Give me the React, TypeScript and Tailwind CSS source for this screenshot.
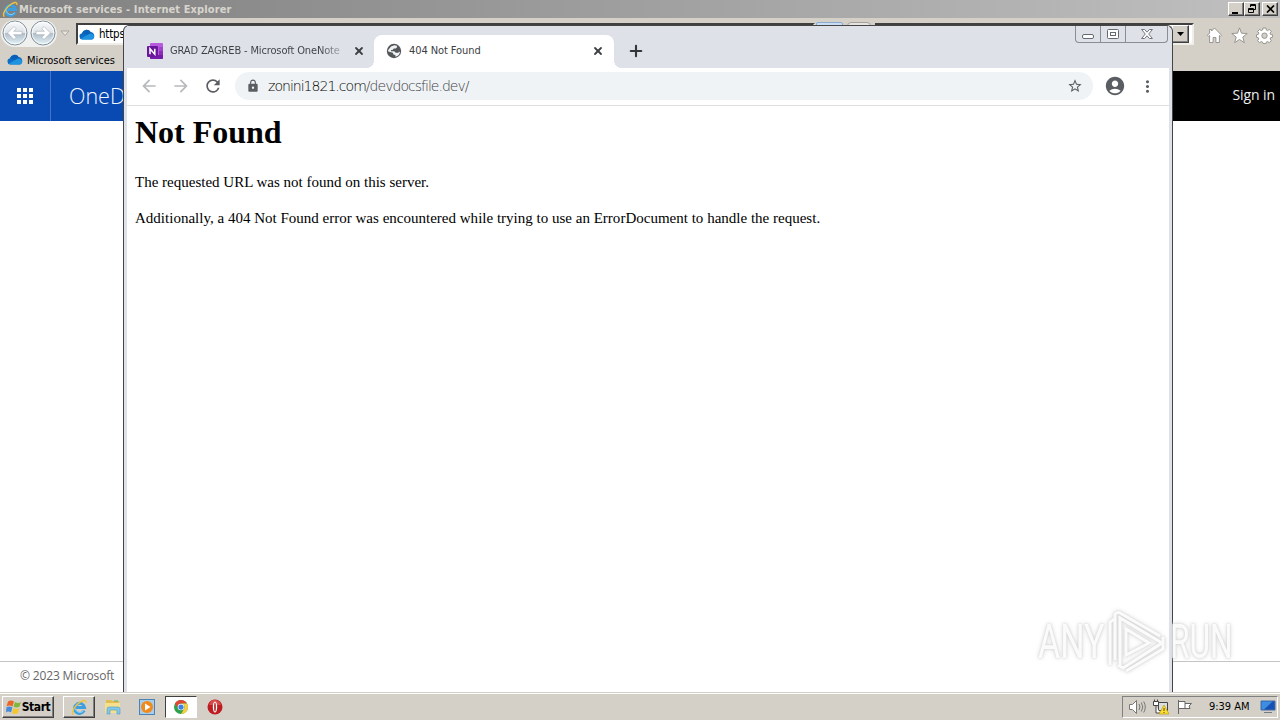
import type { ReactNode } from 'react';
import { Plus, X } from 'lucide-react';
import { MdArrowBack, MdArrowForward, MdRefresh, MdLock, MdStarBorder, MdAccountCircle, MdMoreVert } from 'react-icons/md';

const tahoma = "font-['DejaVu_Sans_Condensed','DejaVu_Sans',sans-serif] [font-stretch:condensed]";
const segoe = "font-['Open_Sans','Noto_Sans',sans-serif]";

function CloudIcon({ className }: { className: string }) {
  return (
    <svg className={className} viewBox="0 0 16 11">
      <path d="M3.200 10.600A3.200 3.200 0 0 1 3 4.300 4.800 4.800 0 0 1 11.600 3 4 4 0 0 1 13 10.600z" fill="#0f6cc4" />
      <path d="M3 4.300A4.800 4.800 0 0 1 11.600 3L9 6z" fill="#0a60b8" />
      <path d="M2 9.500L10 5a4 4 0 0 1 4.500 1A3 3 0 0 1 13 10.600H3.200z" fill="#1f93e0" />
    </svg>
  );
}

function IeIcon({ className }: { className: string }) {
  return (
    <svg className={className} viewBox="0 0 18 18" fill="none">
      <path d="M14 12.200A5.400 5.400 0 1 1 14.400 9H5.400" stroke="#3d9fe0" strokeWidth="3" />
      <path d="M13.300 12.600A5 5 0 0 1 4.500 10" stroke="#8ed6f8" strokeWidth="1" />
      <path d="M2.500 16.500C-.8 14.500 5 5.500 11 2.500c3.500-1.700 5.500-1 4.600 1.800" stroke="#f0c43a" strokeWidth="1.500" />
    </svg>
  );
}

function GlobeIcon() {
  return (
    <svg className="h-4 w-4" viewBox="0 0 16 16">
      <circle cx="8" cy="8" r="7.200" fill="#54575b" />
      <path d="M8.300 2.200l2.500.6.300 1.500-1.500 1.200H7.800L6.500 7H5v1.200h3.200l1.500 1.500H12l2-1.200A6 6 0 0 1 9.500 13.800L9.300 12 7.500 11.500 6.800 9.800 2.300 8.500 2 7.200l3-3.700z" fill="#f1f2f3" />
    </svg>
  );
}

function ClassicButton({ className, children }: { className: string; children: ReactNode }) {
  return (
    <div className={`flex items-center justify-center border border-t-white border-l-white border-r-[#404040] border-b-[#404040] bg-[#d4d0c8] shadow-[inset_-1px_-1px_0_#808080] ${className}`}>
      {children}
    </div>
  );
}

function RoundNav({ back }: { back?: boolean }) {
  return (
    <svg className="h-[26px] w-[28px]" viewBox="0 0 27 26">
      <defs>
        <linearGradient id="navFill" x2="0" y2="1">
          <stop stopColor="#fafbfc" />
          <stop offset=".48" stopColor="#dfe4e9" />
          <stop offset=".52" stopColor="#b2bec9" />
          <stop offset="1" stopColor="#e4f3fa" />
        </linearGradient>
      </defs>
      <circle cx="13.5" cy="13" r="12" fill="url(#navFill)" stroke="#83909b" />
      <circle cx="13.5" cy="13" r="10.8" fill="none" stroke="#fff" strokeOpacity=".8" />
      <path
        d="M6 13l6.500-6.500 2.200 2.200-2.600 2.600H20.500v3.400h-8.400l2.600 2.600-2.200 2.200z"
        fill="#fff"
        stroke="#a3adb6"
        strokeWidth=".6"
        transform={back ? undefined : 'rotate(180 13.5 13)'}
      />
    </svg>
  );
}

function BrowserTitle() {
  return (
    <div className="flex h-[18px] items-center bg-linear-to-r from-[#808080] to-[#c0c0c0] pr-[2px] pl-[2px]">
      <IeIcon className="h-[17px] w-[17px]" />
      <span className={`${tahoma} mt-px flex-1 text-[11px] leading-[17px] font-bold tracking-[0.1px] whitespace-nowrap text-[#d8d5ce]`}>
        Microsoft services - Internet Explorer
      </span>
      <ClassicButton className="h-[14px] w-4">
        <svg className="h-[9px] w-[10px]" viewBox="0 0 10 9"><path d="M1 7h6v2H1z" /></svg>
      </ClassicButton>
      <ClassicButton className="h-[14px] w-4">
        <svg className="h-[10px] w-[10px]" viewBox="0 0 10 10" fill="none" stroke="#000">
          <path d="M3.500 3V.5h5v5H7M3 1.500h6M1.500 4.500h5v4h-5zM1 5.500h6" />
        </svg>
      </ClassicButton>
      <ClassicButton className="ml-[2px] h-[14px] w-4">
        <svg className="h-2 w-[9px]" viewBox="0 0 9 8"><path d="M1 .5l7 7M8 .5l-7 7" stroke="#000" strokeWidth="1.7" /></svg>
      </ClassicButton>
    </div>
  );
}

function ExplorerToolbar() {
  return (
    <div className="flex h-[30px] items-start bg-[#d4d0c8]">
      <div className="mt-[2px] ml-[1px] flex h-[27px] rounded-full bg-[#f0f0ef]">
        <RoundNav back />
        <RoundNav />
      </div>
      <svg className="mt-[12px] ml-[3px] h-[7px] w-[10px]" viewBox="0 0 10 7"><path d="M1 1h8L5 5.500z" fill="#e9e7e2" stroke="#aaa7a0" /></svg>
      <div className="mt-[5px] ml-[6px] flex h-[22px] w-[739px] items-center border-2 border-t-[#404040] border-r-[#f0eee9] border-b-[#f0eee9] border-l-[#404040] bg-white pl-[1px]">
        <CloudIcon className="h-[11px] w-4" />
        <span className={`${tahoma} mt-px ml-[4px] text-[11.5px] tracking-[-0.2px]`}>https</span>
      </div>
      <div className="mt-[4px] ml-[1px] h-[22px] w-[27px] rounded-xs border border-[#8aa9cf] bg-[#c9def5]" />
      <div className="mt-[4px] ml-[4px] h-[22px] w-[24px] rounded-sm border border-[#a3a19c] bg-[#e6e4df]" />
      <div className="mt-[5px] ml-[4px] flex h-[22px] w-[319px] items-center justify-end border-2 border-t-[#404040] border-r-[#f0eee9] border-b-[#f0eee9] border-l-[#404040] bg-white">
        <ClassicButton className="mr-[3px] h-[18px] w-[17px]">
          <svg className="h-1 w-[7px]" viewBox="0 0 7 4"><path d="M0 0h7L3.500 4z" /></svg>
        </ClassicButton>
      </div>
      <div className="mt-[9px] ml-[12px] flex gap-[8px]">
        <svg className="h-[17px] w-[17px]" viewBox="0 0 17 17" fill="#fff" stroke="#8e8c87" strokeWidth=".9">
          <path d="M8.500 1l7 7.200-1.100 1.200-1-.9V15.500h-3.500v-5H7.100v5H3.600V8.500l-1 .9L1.500 8.200l2.100-2.200V2.500h2v1.500z" />
        </svg>
        <svg className="h-[17px] w-[17px]" viewBox="0 0 17 17" fill="#fff" stroke="#8e8c87" strokeWidth=".9">
          <path d="M8.500.9l2 5.300 5.700.3-4.400 3.600 1.500 5.500-4.800-3.100-4.800 3.100 1.500-5.500L.8 6.500l5.700-.3z" />
        </svg>
        <svg className="h-[17px] w-[17px]" viewBox="0 0 17 17" fill="#fff" stroke="#8e8c87" strokeWidth=".9">
          <path d="M7 1h3l.3 2 1.300.6 1.700-1.200 2 2-1.200 1.700.5 1.400 2 .3v2.500l-2 .4-.5 1.300 1.200 1.700-2 2-1.700-1.200-1.300.6-.3 1.500H7l-.4-1.500-1.300-.6-1.700 1.200-2-2 1.200-1.700-.6-1.300-1.700-.4V7.800l1.700-.3.6-1.400-1.200-1.700 2-2 1.700 1.200L6.600 3z" />
          <circle cx="8.500" cy="8.700" r="2.700" fill="#d4d0c8" />
        </svg>
      </div>
    </div>
  );
}

function ExplorerWindow() {
  return (
    <div className="flex h-[692px] flex-col bg-white">
      <BrowserTitle />
      <ExplorerToolbar />
      <div className="flex h-[23px] items-center bg-[#d4d0c8] pl-[7px]">
        <CloudIcon className="h-[11px] w-4" />
        <span className={`${tahoma} mt-[3px] ml-1 text-[11px] tracking-[-0.05px]`}>Microsoft services</span>
      </div>
      <div className="flex h-[50px] items-center bg-black text-white">
        <div className="flex h-full w-[51px] items-center justify-center border-r border-[#4474c6] bg-[#094ab2]">
          <div className="grid grid-cols-3 gap-[2px]">
            {Array.from({ length: 9 }, (_, i) => <i key={i} className="h-1 w-1 bg-white" />)}
          </div>
        </div>
        <div className={`${segoe} flex h-full w-[300px] items-center bg-[#094ab2] pl-[18px] text-[21.5px] font-light text-[#f2f7ff]`}>OneDrive</div>
        <span className={`${segoe} ml-auto pr-[5px] pb-[3px] text-[14px] tracking-[-0.1px] text-[#eee]`}>Sign in</span>
      </div>
      <div className={`${segoe} mt-auto flex h-[31px] items-center border-t border-[#c4c4c4] pb-[2px] pl-[20px] text-[12px] tracking-[-0.15px] text-[#666]`}>
        © 2023 Microsoft
      </div>
    </div>
  );
}

function OneNoteIcon() {
  return (
    <svg className="h-4 w-4" viewBox="0 0 16 16">
      <rect x="3" width="13" height="16" rx="1" fill="#b85add" />
      <path d="M12 4h4v4h-4z" fill="#9f44c8" />
      <path d="M12 8h4v4h-4z" fill="#8a2eb6" />
      <path d="M3 12h13v3a1 1 0 0 1-1 1H4a1 1 0 0 1-1-1z" fill="#7719aa" />
      <rect y="3" width="11" height="11" rx="1" fill="#6b159b" />
      <path d="M3 11.300V5.700l4.800 5.600V5.700" fill="none" stroke="#fff" strokeWidth="1.500" />
    </svg>
  );
}

function ChromeTabs() {
  return (
    <div className="flex h-[42px] items-end bg-[#dee1e8]">
      <div className="flex h-[33px] w-[247px] items-center pb-px pl-5">
        <OneNoteIcon />
        <span className={`${tahoma} mt-px ml-[7px] w-[171px] bg-linear-to-r from-[#3c4043] from-88% to-[#3c4043]/30 bg-clip-text text-[11px] tracking-[-0.14px] whitespace-nowrap text-transparent`}>
          GRAD ZAGREB - Microsoft OneNote
        </span>
        <X className="ml-[12px] h-3 w-3 text-[#3c4043]" strokeWidth={3.6} />
      </div>
      <div className="relative flex h-[33px] w-[240px] items-center rounded-t-lg bg-white pb-px pl-[12px] before:absolute before:bottom-0 before:-left-2 before:h-2 before:w-2 before:bg-[radial-gradient(circle_at_0_0,transparent_8px,white_8px)] after:absolute after:-right-2 after:bottom-0 after:h-2 after:w-2 after:bg-[radial-gradient(circle_at_100%_0,transparent_8px,white_8px)]">
        <GlobeIcon />
        <span className={`${tahoma} mt-px ml-[7px] text-[11px] tracking-[-0.08px] text-[#3c4043]`}>404 Not Found</span>
        <X className="mr-[10px] ml-auto h-3 w-3 text-[#3c4043]" strokeWidth={3.6} />
      </div>
      <Plus className="mb-[8px] ml-[13px] h-[18px] w-[18px] text-[#35363a]" strokeWidth={2.8} />
      <div className="mr-[1px] mb-[25px] ml-auto flex h-[17px] w-[93px] rounded-b border border-t-0 border-[#888d96] text-[#656a70]">
        <div className="flex w-[25px] items-center justify-center border-r border-[#888d96]">
          <svg className="mt-1 h-[5px] w-[12px]" viewBox="0 0 12 5"><rect x=".5" y=".5" width="11" height="4" rx="1.500" fill="#fff" stroke="currentColor" /></svg>
        </div>
        <div className="flex w-[25px] items-center justify-center border-r border-[#888d96]">
          <svg className="h-[10px] w-[12px]" viewBox="0 0 12 10" fill="#fff" stroke="currentColor"><rect x=".5" y=".5" width="11" height="9" rx="1" /><rect x="3.500" y="3.500" width="5" height="3" /></svg>
        </div>
        <div className="flex flex-1 items-center justify-center">
          <svg className="h-[10px] w-[12px]" viewBox="0 0 12 10"><path d="M.6.5h3L6 3.200 8.400.5h3L7.700 5l3.700 4.500h-3L6 6.800 3.600 9.500h-3L4.300 5z" fill="#fff" stroke="currentColor" strokeWidth=".9" /></svg>
        </div>
      </div>
    </div>
  );
}

function ChromeToolbar() {
  return (
    <div className="flex h-[38px] items-center border-b border-[#dcdee0] pb-px pl-[12px] text-[#5a5e63]">
      <MdArrowBack className="h-5 w-5 text-[#b7b9bc]" />
      <MdArrowForward className="ml-[12px] h-5 w-5 text-[#b7b9bc]" />
      <MdRefresh className="ml-[12px] h-5 w-5" />
      <div className="ml-[12px] flex h-7 w-[858px] items-center rounded-full bg-[#f0f3f5] pr-[10px] pl-[11px]">
        <MdLock className="h-[14px] w-[14px]" />
        <span className="ml-2 font-['DejaVu_Sans_Light','DejaVu_Sans',sans-serif] text-[14px] font-extralight tracking-[-0.97px] text-[#3c4045]">
          <span className="text-black">zonini1821.com</span>/devdocsfile.dev/
        </span>
        <MdStarBorder className="ml-auto h-4 w-4" />
      </div>
      <MdAccountCircle className="ml-[11px] h-[22px] w-[22px]" />
      <MdMoreVert className="ml-[12px] h-[19px] w-[19px]" />
    </div>
  );
}

function ChromeWindow() {
  return (
    <div className="absolute top-[25px] left-[123px] flex h-[667px] w-[1050px] flex-col rounded-t-md border border-b-0 border-[#454545] bg-[#dee1e8]">
      <div className="mr-[3px] ml-[3px] flex flex-1 flex-col bg-white">
        <ChromeTabs />
        <ChromeToolbar />
        <div className="px-2 font-['Liberation_Serif',serif] text-black">
          <h1 className="mt-[8px] text-[32px] leading-[37px] font-bold tracking-[-0.03px]">Not Found</h1>
          <p className="mt-[22px] text-[15px] leading-[18px]">The requested URL was not found on this server.</p>
          <p className="mt-[18px] text-[15px] leading-[18px] tracking-[0.008px]">
            Additionally, a 404 Not Found error was encountered while trying to use an ErrorDocument to handle the request.
          </p>
        </div>
      </div>
    </div>
  );
}

function Watermark() {
  return (
    <div className="absolute top-[609px] left-[1038px] flex h-[66px] items-center font-['Roboto',sans-serif] text-[48px] leading-[66px] text-white/90 [filter:drop-shadow(0_0_1px_#d0d0d0)_drop-shadow(0_0_2px_#ddd)]">
      <span className="w-[68px] origin-left scale-x-[0.71]">ANY</span>
      <svg className="h-[64px] w-[60px]" viewBox="0 0 60 64" fill="none" stroke="white" strokeWidth="3" strokeOpacity=".9">
        <path d="M4 55V12l6-4M9 50V5c0-2 3-3 5-2l40 23M14 56V8l42 25L17 58l-5-3M20 61l37-22V27M20 45V19l23 14z" />
      </svg>
      <span className="ml-[4px] w-[70px] origin-left scale-x-[0.66]">RUN</span>
    </div>
  );
}

function ChromeIcon() {
  return (
    <svg className="h-[14px] w-[14px]" viewBox="0 0 16 16">
      <circle cx="8" cy="8" r="8" fill="#2fa14c" />
      <path d="M1.100 4A8 8 0 0 1 14.900 4H8a4 4 0 0 0-3.500 6z" fill="#df4636" />
      <path d="M14.900 4A8 8 0 0 1 8 16l3.500-6A4 4 0 0 0 8 4z" fill="#f8ce3c" />
      <circle cx="8" cy="8" r="3.800" fill="#fff" />
      <circle cx="8" cy="8" r="3" fill="#3d7fe5" />
    </svg>
  );
}

function Taskbar() {
  return (
    <div className="flex h-[28px] items-center border-t border-[#d4d0c8] bg-[#d4d0c8] shadow-[inset_0_1px_0_white]">
      <ClassicButton className="mt-[1px] ml-[2px] h-[22px] w-[52px]">
        <svg className="h-[16px] w-[16px]" viewBox="0 0 16 15">
          <path d="M2 2q3-2 6 0L6.500 7q-3-2-6 0z" fill="#e96627" />
          <path d="M9 2.500q3 2 6 0L13.500 7q-3 2-6 0z" fill="#80b83a" />
          <path d="M.4 8q3-2 6 0L5 13q-3-2-5 0z" fill="#458bdb" />
          <path d="M7.300 8.500q3 2 6 0L12 13.500q-3 2-6 0z" fill="#f4c634" />
        </svg>
        <span className={`${tahoma} text-[12px] font-bold tracking-[-0.45px]`}>Start</span>
      </ClassicButton>
      <ClassicButton className="mt-[1px] ml-[9px] h-[22px] w-8">
        <IeIcon className="h-[17px] w-[17px]" />
      </ClassicButton>
      <div className="flex w-[70px] items-center pl-[10px]">
        <svg className="h-4 w-4" viewBox="0 0 16 16">
          <path d="M1 3V1h5l1 1h7v3H1z" fill="#e4bd50" />
          <path d="M0 4h15v10H0z" fill="#f6df8d" />
          <path d="M9 2h4" stroke="#5db66b" />
          <path d="M2 15V10q0-2 2-2h9q2 0 2 2v5h-3v-4H5v4z" fill="#83c8e8" stroke="#4a9dc7" strokeWidth=".6" />
        </svg>
        <svg className="ml-[18px] h-4 w-4" viewBox="0 0 16 16">
          <rect x=".5" y=".5" width="15" height="15" fill="#a9cde9" stroke="#4c83b5" />
          <circle cx="8" cy="8" r="6" fill="#f18a1d" />
          <path d="M6 4.500l5.500 3.500L6 11.500z" fill="#fff" />
        </svg>
      </div>
      <div className="mt-[1px] flex h-[22px] w-8 items-center justify-center border border-t-[#404040] border-r-white border-b-white border-l-[#404040] bg-white">
        <ChromeIcon />
      </div>
      <svg className="ml-[10px] h-4 w-4" viewBox="0 0 16 16">
        <circle cx="8" cy="8" r="7.500" fill="#be1c20" />
        <path d="M2 6Q4 0 9 1q4 1 5 5z" fill="#d9484a" />
        <ellipse cx="8" cy="8" rx="2.200" ry="5.500" fill="#fff" />
        <ellipse cx="8" cy="8" rx=".8" ry="4.500" fill="#a31519" />
      </svg>
      <div className="mt-[1px] mr-[2px] ml-auto flex h-[22px] w-[156px] items-center border border-t-[#808080] border-r-white border-b-white border-l-[#808080] pl-[6px]">
        <svg className="h-4 w-[17px]" viewBox="0 0 17 16" fill="none" stroke="#777">
          <path d="M.5 5.500h3l4-4v13l-4-4h-3z" fill="#fff" />
          <path d="M10 5q2 3 0 6M12.300 3.500q3 4.500 0 9M14.700 2.500q3.200 5.500 0 11" />
        </svg>
        <svg className="ml-[7px] h-4 w-4" viewBox="0 0 16 16" fill="none" stroke="#444">
          <path d="M5.500 3.500h9v8h-9z" fill="#ddd" />
          <path d="M.5 2.500h5v4h-5zM1.500.5v2M4.500.5v2M3 7v7h4" fill="#fff" />
          <path d="M11 6l5 9H6z" fill="#ffe02b" stroke="#b89a16" strokeWidth=".7" />
          <path d="M11 9v3M11 13v1" />
        </svg>
        <svg className="ml-[8px] h-4 w-4" viewBox="0 0 16 16" fill="#fff" stroke="#666">
          <path d="M1.500 1v14M2 2.500h6v7H2M8 4.500h6.500L12 7l1 2.500H8" />
        </svg>
        <span className={`${tahoma} mt-px ml-[16px] text-[11px] tracking-[-0.02px] whitespace-nowrap`}>9:39 AM</span>
        <svg className="mr-[1px] ml-auto h-[14px] w-[16px]" viewBox="0 0 16 14">
          <path d="M1 1h14v9H1z" fill="#1750b4" stroke="#426da4" />
          <path d="M1.500 1.500h11L4 9.500H1.500z" fill="#3f8de0" />
          <path d="M4 12h8v1H4z" fill="#717b84" />
        </svg>
      </div>
    </div>
  );
}

export default function App() {
  return (
    <div className="relative h-[720px] w-[1280px] overflow-hidden text-black">
      <ExplorerWindow />
      <ChromeWindow />
      <Watermark />
      <Taskbar />
    </div>
  );
}
